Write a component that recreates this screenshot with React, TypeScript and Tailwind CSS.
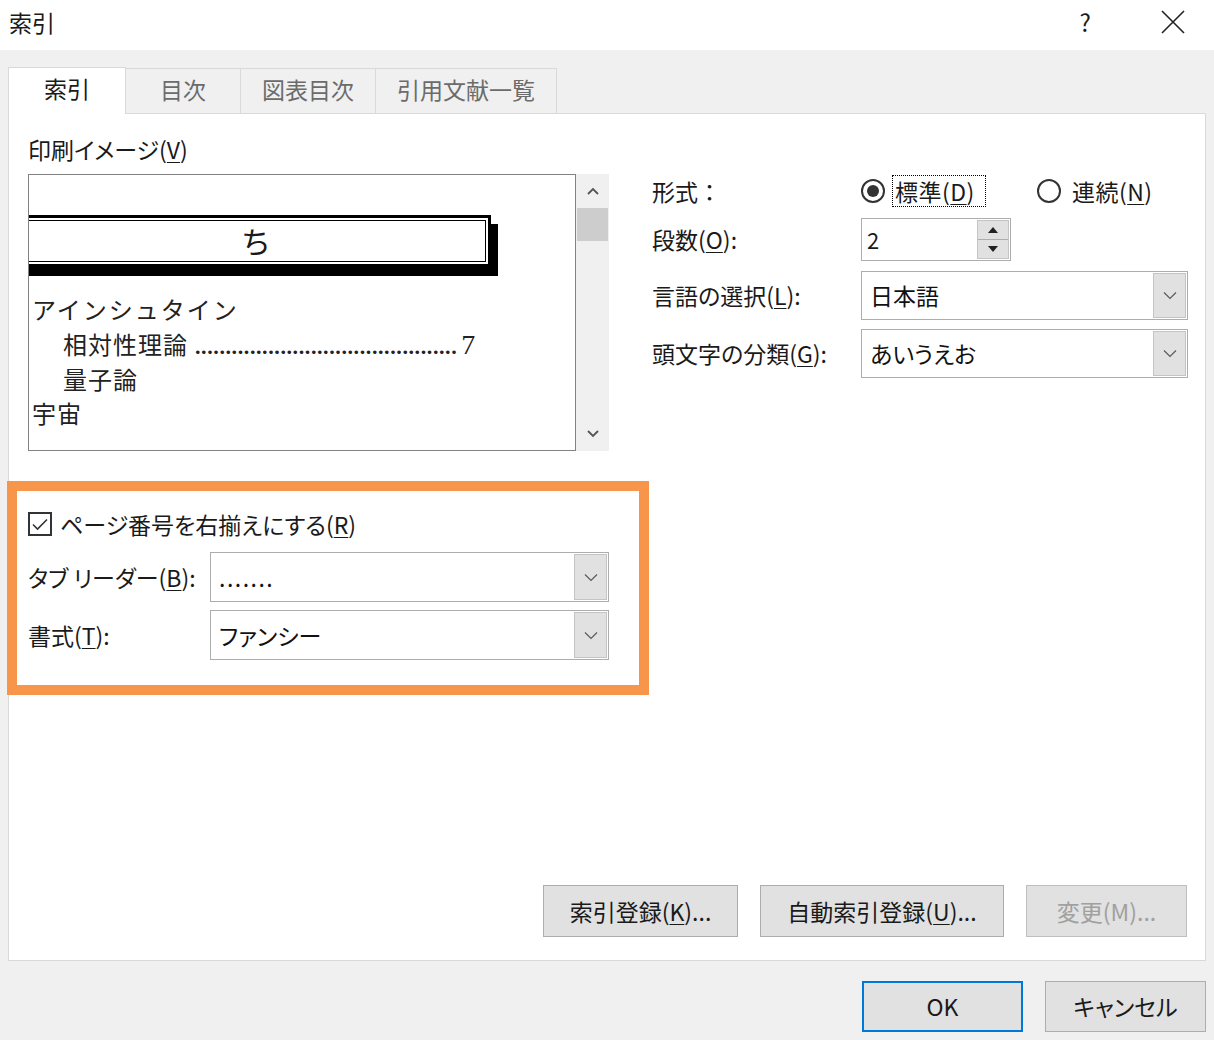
import React from "react"

function Chevron() {
  return (
    <svg width="14" height="9" viewBox="0 0 14 9" fill="none">
      <path d="M1 1.5 L7 7.5 L13 1.5" stroke="#5a5a5a" strokeWidth="1.2" />
    </svg>
  )
}

function Select({ value, className, valueClass = "" }: { value: string; className: string; valueClass?: string }) {
  return (
    <div className={`flex items-stretch border border-[#adadad] bg-white ${className}`}>
      <div className={`flex-1 flex items-center pl-[8px] text-[23px] text-[#111] ${valueClass}`}>{value}</div>
      <div className="w-[33px] my-[1px] mr-[1px] bg-[#e1e1e1] border border-[#c4c4c4] flex items-center justify-center">
        <Chevron />
      </div>
    </div>
  )
}

function Key({ k }: { k: string }) {
  return <u className="underline-offset-[3px] decoration-1">{k}</u>
}

export default function App() {
  const tabs = ["目次", "図表目次", "引用文献一覧"]
  const tabWidths = ["w-[115px]", "w-[135px]", "w-[181px]"]

  return (
    <div className="w-[1214px] h-[1040px] bg-[#f0f0f0] flex flex-col text-[#1a1a1a] font-['Noto_Sans_CJK_JP','Noto_Sans',sans-serif] [font-feature-settings:'palt']">
      {/* title bar */}
      <div className="h-[50px] bg-white flex items-center pl-[9px]">
        <span className="text-[23px] leading-none mt-[-6px]">索引</span>
        <div className="flex-1" />
        <span className="text-[24px] leading-none mt-[-6px] mr-[70px]">?</span>
        <svg width="24" height="24" viewBox="0 0 24 24" className="mr-[29px] mt-[-6px]">
          <path d="M1 1 L23 23 M23 1 L1 23" stroke="#222" strokeWidth="1.6" />
        </svg>
      </div>

      {/* tabs */}
      <div className="flex pl-[8px] pt-[16px] h-[63px] items-end">
        <div className="w-[118px] h-[47px] bg-white border border-b-0 border-[#d9d9d9] flex items-center justify-center text-[23px] relative z-10 mb-[-1px] pb-[5px]">
          索引
        </div>
        {tabs.map((t, i) => (
          <div
            key={t}
            className={`${tabWidths[i]} h-[45px] border border-l-0 border-b-0 border-[#d9d9d9] flex items-center justify-center text-[23px] text-[#6b6b6b] pb-[4px]`}
          >
            {t}
          </div>
        ))}
      </div>

      {/* panel */}
      <div className="mx-[8px] h-[848px] bg-white border border-[#d9d9d9] flex flex-col">
        <div className="flex">
          {/* left column */}
          <div className="pl-[19px] w-[601px] pt-[19px]">
            <div className="text-[23px] leading-[32px] h-[32px]">
              印刷イメージ(<Key k="V" />)
            </div>
            <div className="mt-[9px] flex h-[277px]">
              <div className="w-[548px] border border-[#828282] overflow-hidden font-['Liberation_Serif','Noto_Sans_CJK_JP',serif] [font-feature-settings:normal]">
                <div className="pt-[40px]">
                  <div className="ml-[-8px] w-[470px] h-[52px] border-[3px] border-black p-[2px] shadow-[7px_9px_0_#000]">
                    <div className="h-full border border-black flex items-center justify-center text-[30px] leading-none pt-[3px]">
                      ち
                    </div>
                  </div>
                </div>
                <div className="mt-[27px] pl-[3px] text-[24px] leading-[34px] text-[#222]">
                  <div className="tracking-[2px]">アインシュタイン</div>
                  <div className="pl-[31px] flex items-baseline whitespace-nowrap">
                    <span className="tracking-[1px]">相対性理論</span>
                    <span className="ml-[7px] text-[22px] tracking-[0.6px] font-bold">{".".repeat(43)}</span>
                    <span className="text-[28px] ml-[4px]">7</span>
                  </div>
                  <div className="pl-[31px] tracking-[1px]">量子論</div>
                  <div className="tracking-[1px]">宇宙</div>
                </div>
              </div>
              <div className="w-[33px] bg-[#f0f0f0] flex flex-col items-center">
                <div className="h-[34px] flex items-center justify-center">
                  <svg width="12" height="8" viewBox="0 0 12 8" fill="none">
                    <path d="M1 7 L6 2 L11 7" stroke="#555" strokeWidth="1.8" />
                  </svg>
                </div>
                <div className="w-[31px] h-[33px] bg-[#cdcdcd]" />
                <div className="flex-1" />
                <div className="h-[34px] flex items-center justify-center">
                  <svg width="12" height="8" viewBox="0 0 12 8" fill="none">
                    <path d="M1 1 L6 6 L11 1" stroke="#555" strokeWidth="1.8" />
                  </svg>
                </div>
              </div>
            </div>

            {/* highlighted group */}
            <div className="mt-[30px] ml-[-21px] w-[642px] h-[214px] border-[10px] border-[#f7964a] pl-[11px] pt-[17px]">
              <div className="flex items-center h-[32px] text-[23px]">
                <div className="w-[24px] h-[24px] border-2 border-[#333] flex items-center justify-center mr-[8px]">
                  <svg width="16" height="13" viewBox="0 0 16 13" fill="none">
                    <path d="M1 6.5 L5.5 11 L15 1.5" stroke="#333" strokeWidth="1.6" />
                  </svg>
                </div>
                ページ番号を右揃えにする(<Key k="R" />)
              </div>
              <div className="flex items-center mt-[12px]">
                <div className="w-[182px] text-[23px]">
                  タブ リーダー(<Key k="B" />):
                </div>
                <Select value="......." valueClass="tracking-[1.5px]" className="w-[399px] h-[50px]" />
              </div>
              <div className="flex items-center mt-[8px]">
                <div className="w-[182px] text-[23px]">
                  書式(<Key k="T" />):
                </div>
                <Select value="ファンシー" className="w-[399px] h-[50px]" />
              </div>
            </div>
          </div>

          {/* right column */}
          <div className="ml-[42px] pt-[61px] text-[23px]">
            <div className="flex items-center h-[32px]">
              <div className="w-[209px] [font-feature-settings:normal]">形式：</div>
              <div className="w-[24px] h-[24px] rounded-full border-2 border-[#333] flex items-center justify-center">
                <div className="w-[12px] h-[12px] rounded-full bg-[#333]" />
              </div>
              <div className="ml-[7px] h-[32px] border border-dotted border-black pl-[2px] pr-[10px] flex items-center tracking-[0.5px]">
                標準(<Key k="D" />)
              </div>
              <div className="ml-[51px] w-[24px] h-[24px] rounded-full border-2 border-[#333]" />
              <div className="ml-[11px] tracking-[0.5px]">
                連続(<Key k="N" />)
              </div>
            </div>
            <div className="flex items-center mt-[11px]">
              <div className="w-[209px]">
                段数(<Key k="O" />):
              </div>
              <div className="w-[150px] h-[43px] border border-[#adadad] flex">
                <div className="flex-1 flex items-center pl-[5px] text-[22px]">2</div>
                <div className="w-[32px] m-[1px] flex flex-col border border-[#c4c4c4]">
                  <div className="flex-1 bg-[#e1e1e1] border-b border-[#adadad] flex items-center justify-center">
                    <svg width="10" height="6" viewBox="0 0 10 6">
                      <path d="M0 6 L5 0 L10 6 Z" fill="#222" />
                    </svg>
                  </div>
                  <div className="flex-1 bg-[#e1e1e1] flex items-center justify-center">
                    <svg width="10" height="6" viewBox="0 0 10 6">
                      <path d="M0 0 L10 0 L5 6 Z" fill="#222" />
                    </svg>
                  </div>
                </div>
              </div>
            </div>
            <div className="flex items-center mt-[10px]">
              <div className="w-[209px]">
                言語の選択(<Key k="L" />):
              </div>
              <Select value="日本語" className="w-[327px] h-[49px]" />
            </div>
            <div className="flex items-center mt-[9px]">
              <div className="w-[209px]">
                頭文字の分類(<Key k="G" />):
              </div>
              <Select value="あいうえお" className="w-[327px] h-[49px]" />
            </div>
          </div>
        </div>

        <div className="mt-auto mb-[23px] mr-[18px] flex justify-end gap-[22px] text-[23px]">
          <div className="w-[195px] h-[52px] bg-[#e1e1e1] border border-[#adadad] flex items-center justify-center">
            索引登録(<Key k="K" />)...
          </div>
          <div className="w-[244px] h-[52px] bg-[#e1e1e1] border border-[#adadad] flex items-center justify-center">
            自動索引登録(<Key k="U" />)...
          </div>
          <div className="w-[161px] h-[52px] bg-[#e1e1e1] border border-[#bfbfbf] flex items-center justify-center text-[#a0a0a0]">
            変更(M)...
          </div>
        </div>
      </div>

      {/* dialog buttons */}
      <div className="mt-[20px] mr-[8px] flex justify-end gap-[22px] text-[23px]">
        <div className="w-[161px] h-[51px] bg-[#e1e1e1] border-2 border-[#0078d7] flex items-center justify-center">
          OK
        </div>
        <div className="w-[161px] h-[51px] bg-[#e1e1e1] border border-[#adadad] flex items-center justify-center">
          キャンセル
        </div>
      </div>
    </div>
  )
}
